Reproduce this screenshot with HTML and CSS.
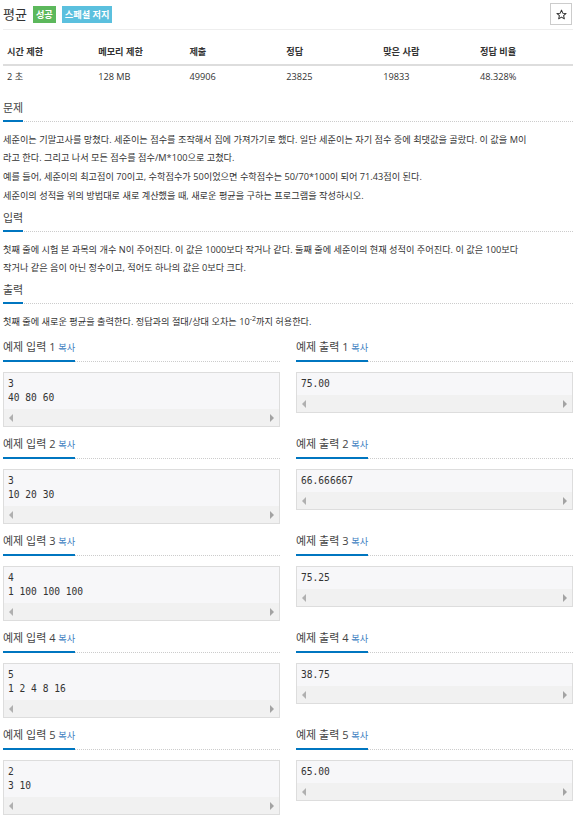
FILE: index.html
```html
<!DOCTYPE html>
<html lang="ko">
<head>
<meta charset="utf-8">
<title>평균</title>
<link rel="stylesheet" href="styles.css">
</head>
<body>
<div class="page">
  <div class="page-header">
    <div class="title-line">
      <span class="title">평균</span>
      <span class="badge badge-green">성공</span>
      <span class="badge badge-blue">스페셜 저지</span>
    </div>
    <button class="star-btn" type="button" aria-label="즐겨찾기">
      <svg width="11" height="11" viewBox="0 0 24 24"><path d="M12 2.5l2.9 6.6 7.1.6-5.4 4.7 1.6 7-6.2-3.7-6.2 3.7 1.6-7L2 9.7l7.1-.6z" fill="none" stroke="#333" stroke-width="2.2" stroke-linejoin="round"/></svg>
    </button>
  </div>

  <table class="info">
    <thead>
      <tr><th class="w16">시간 제한</th><th class="w16">메모리 제한</th><th class="w17">제출</th><th class="w17">정답</th><th class="w17">맞은 사람</th><th class="w17">정답 비율</th></tr>
    </thead>
    <tbody>
      <tr><td>2 초</td><td>128 MB</td><td>49906</td><td>23825</td><td>19833</td><td>48.328%</td></tr>
    </tbody>
  </table>

  <section class="section">
    <div class="headline"><h2>문제</h2></div>
    <p>세준이는 기말고사를 망쳤다. 세준이는 점수를 조작해서 집에 가져가기로 했다. 일단 세준이는 자기 점수 중에 최댓값을 골랐다. 이 값을 M이<br>라고 한다. 그리고 나서 모든 점수를 점수/M*100으로 고쳤다.</p>
    <p>예를 들어, 세준이의 최고점이 70이고, 수학점수가 50이었으면 수학점수는 50/70*100이 되어 71.43점이 된다.</p>
    <p>세준이의 성적을 위의 방법대로 새로 계산했을 때, 새로운 평균을 구하는 프로그램을 작성하시오.</p>
  </section>

  <section class="section">
    <div class="headline"><h2>입력</h2></div>
    <p>첫째 줄에 시험 본 과목의 개수 N이 주어진다. 이 값은 1000보다 작거나 같다. 둘째 줄에 세준이의 현재 성적이 주어진다. 이 값은 100보다<br>작거나 같은 음이 아닌 정수이고, 적어도 하나의 값은 0보다 크다.</p>
  </section>

  <section class="section">
    <div class="headline"><h2>출력</h2></div>
    <p>첫째 줄에 새로운 평균을 출력한다. 정답과의 절대/상대 오차는 10<sup>-2</sup>까지 허용한다.</p>
  </section>

  <div class="samples">
    <div class="sample">
      <div class="headline"><h2>예제 입력 1 <a class="copy">복사</a></h2></div>
      <div class="box"><pre>3
40 80 60</pre><div class="scrollbar"><span class="arr-l"></span><span class="arr-r"></span></div></div>
    </div>
    <div class="sample">
      <div class="headline"><h2>예제 출력 1 <a class="copy">복사</a></h2></div>
      <div class="box"><pre>75.00</pre><div class="scrollbar"><span class="arr-l"></span><span class="arr-r"></span></div></div>
    </div>

    <div class="sample">
      <div class="headline"><h2>예제 입력 2 <a class="copy">복사</a></h2></div>
      <div class="box"><pre>3
10 20 30</pre><div class="scrollbar"><span class="arr-l"></span><span class="arr-r"></span></div></div>
    </div>
    <div class="sample">
      <div class="headline"><h2>예제 출력 2 <a class="copy">복사</a></h2></div>
      <div class="box"><pre>66.666667</pre><div class="scrollbar"><span class="arr-l"></span><span class="arr-r"></span></div></div>
    </div>

    <div class="sample">
      <div class="headline"><h2>예제 입력 3 <a class="copy">복사</a></h2></div>
      <div class="box"><pre>4
1 100 100 100</pre><div class="scrollbar"><span class="arr-l"></span><span class="arr-r"></span></div></div>
    </div>
    <div class="sample">
      <div class="headline"><h2>예제 출력 3 <a class="copy">복사</a></h2></div>
      <div class="box"><pre>75.25</pre><div class="scrollbar"><span class="arr-l"></span><span class="arr-r"></span></div></div>
    </div>

    <div class="sample">
      <div class="headline"><h2>예제 입력 4 <a class="copy">복사</a></h2></div>
      <div class="box"><pre>5
1 2 4 8 16</pre><div class="scrollbar"><span class="arr-l"></span><span class="arr-r"></span></div></div>
    </div>
    <div class="sample">
      <div class="headline"><h2>예제 출력 4 <a class="copy">복사</a></h2></div>
      <div class="box"><pre>38.75</pre><div class="scrollbar"><span class="arr-l"></span><span class="arr-r"></span></div></div>
    </div>

    <div class="sample">
      <div class="headline"><h2>예제 입력 5 <a class="copy">복사</a></h2></div>
      <div class="box"><pre>2
3 10</pre><div class="scrollbar"><span class="arr-l"></span><span class="arr-r"></span></div></div>
    </div>
    <div class="sample">
      <div class="headline"><h2>예제 출력 5 <a class="copy">복사</a></h2></div>
      <div class="box"><pre>65.00</pre><div class="scrollbar"><span class="arr-l"></span><span class="arr-r"></span></div></div>
    </div>
  </div>
</div>
</body>
</html>
```

FILE: styles.css
```css
* { box-sizing: border-box; }
html, body { margin: 0; padding: 0; background: #fff; }
body {
  font-family: "Open Sans", "Noto Sans CJK KR", sans-serif;
  font-size: 9.2px;
  color: #333;
}
.page { padding: 3px 3px 0 3px; width: 576px; }

.page-header {
  display: flex;
  justify-content: space-between;
  align-items: center;
  padding-bottom: 4px;
  border-bottom: 1px solid #eee;
}
.title-line { display: flex; align-items: center; height: 22px; }
.title { font-size: 13px; line-height: 22px; color: #333; margin-right: 6px; }
.badge {
  display: inline-block;
  height: 17px;
  line-height: 17px;
  padding: 0 3px;
  color: #fff;
  font-weight: 700;
  font-size: 9.2px;
  margin-right: 6px;
}
.badge-green { background: #5cb85c; }
.badge-blue { background: #5bc0de; }
.star-btn {
  width: 22px; height: 22px;
  border: 1px solid #ccc;
  background: #fff;
  padding: 0;
  display: flex; align-items: center; justify-content: center;
  margin-right: 1px;
}

.info { width: 100%; border-collapse: collapse; margin-top: 10px; }
.info th, .info td { text-align: left; padding: 5px 4px; line-height: 14px; }
.info th { font-weight: 700; border-bottom: 2px solid #ddd; }
.info td { padding: 4px 4px; }
.w16 { width: 16%; }
.w17 { width: 17%; }

.section { margin-top: 12px; }
.section + .section { margin-top: 5px; }
.headline { border-bottom: 1px dotted #ccc; margin-bottom: 9px; }
.headline h2 {
  display: inline-block;
  margin: 0 0 -1px 0;
  font-size: 11px;
  font-weight: 400;
  line-height: 16px;
  padding-bottom: 4px;
  color: #444;
  border-bottom: 2px solid #0076c0;
}
.section p { margin: 0 0 1px; line-height: 18px; }
sup { font-size: 7px; line-height: 0; vertical-align: 4px; }

.samples {
  display: grid;
  grid-template-columns: 1fr 1fr;
  column-gap: 16px;
  margin-top: 8px;
}
.sample { margin-bottom: 9px; }
.sample .headline { margin-bottom: 10px; }
.copy { color: #3b7dbf; font-size: 9.2px; text-decoration: none; }
.box {
  border: 1px solid #ddd;
  background: #f7f7f9;
}
.box pre {
  margin: 0;
  padding: 4px 4px 4px;
  font-family: "DejaVu Sans Mono", monospace;
  font-size: 9.6px;
  line-height: 14px;
  color: #333;
}
.scrollbar {
  height: 17px;
  background: #f1f1f1;
  display: flex;
  justify-content: space-between;
  align-items: center;
  padding: 0 5px;
}
.arr-l, .arr-r { width: 0; height: 0; border-top: 4px solid transparent; border-bottom: 4px solid transparent; }
.arr-l { border-right: 4px solid #b0b0b0; }
.arr-r { border-left: 4px solid #a3a3a3; }
```
